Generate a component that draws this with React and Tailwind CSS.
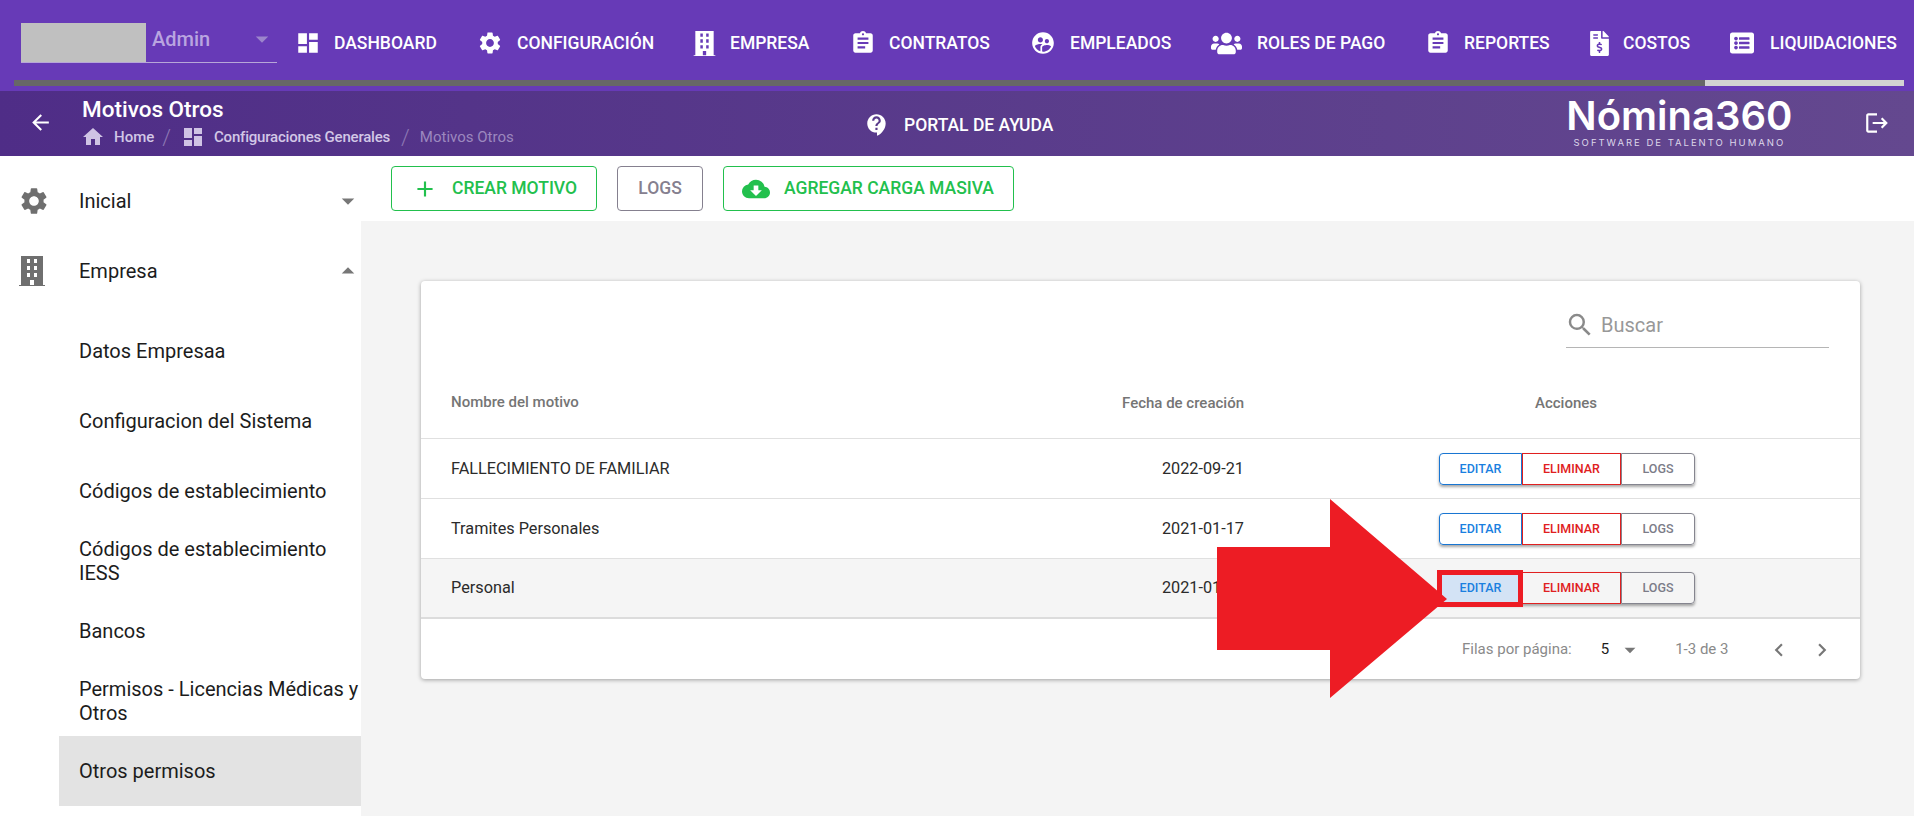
import {
  MdDashboard, MdSettings, MdAssignment, MdSupervisedUserCircle, MdContactSupport, MdCloudDownload,
  MdLogout, MdArrowBack, MdHome, MdSearch, MdChevronLeft, MdChevronRight, MdAdd, MdArrowDropDown, MdArrowDropUp,
} from 'react-icons/md'
import { FaUsers, FaFileInvoiceDollar, FaListAlt } from 'react-icons/fa'

// edificio de la empresa, no hay uno igual en los paquetes
function BuildingIcon({ className }) {
  return (
    <svg viewBox="0 0 26 30" className={className} fill="currentColor">
      <path
        fillRule="evenodd"
        d="M2 0H24V29H26V30H0V29H2V0ZM8 3V7H11V3H8ZM15 3V7H18V3H15ZM8 10V14H11V10H8ZM15 10V14H18V10H15ZM8 17V21H11V17H8ZM15 17V21H18V17H15ZM11 24V29H15V24H11Z"
      />
    </svg>
  )
}

const navItems = [
  { label: 'DASHBOARD', icon: <MdDashboard className="w-[26px] h-[26px]" />, gap: 'gap-[13px]', width: 'w-[182px]' },
  { label: 'CONFIGURACIÓN', icon: <MdSettings className="w-[26px] h-[26px]" />, gap: 'gap-[14px]', width: 'w-[216px]' },
  { label: 'EMPRESA', icon: <BuildingIcon className="w-[23px] h-[25px]" />, gap: 'gap-[14px]', width: 'w-[157px]' },
  { label: 'CONTRATOS', icon: <MdAssignment className="w-[26px] h-[26px]" />, gap: 'gap-[13px]', width: 'w-[180px]' },
  { label: 'EMPLEADOS', icon: <MdSupervisedUserCircle className="w-[26px] h-[26px]" />, gap: 'gap-[14px]', width: 'w-[181px]' },
  { label: 'ROLES DE PAGO', icon: <FaUsers className="w-[31px] h-[25px]" />, gap: 'gap-[15px]', width: 'w-[214px]' },
  { label: 'REPORTES', icon: <MdAssignment className="w-[26px] h-[26px]" />, gap: 'gap-[13px]', width: 'w-[165px]' },
  { label: 'COSTOS', icon: <FaFileInvoiceDollar className="w-[19px] h-[25px]" />, gap: 'gap-[14px]', width: 'w-[139px]' },
  { label: 'LIQUIDACIONES', icon: <FaListAlt className="w-[26px] h-[24px]" />, gap: 'gap-[15px]', width: 'w-[175px]' },
]

const subItems = [
  'Datos Empresaa',
  'Configuracion del Sistema',
  'Códigos de establecimiento',
  'Códigos de establecimiento IESS',
  'Bancos',
  'Permisos - Licencias Médicas y Otros',
  'Otros permisos',
]

const rows = [
  { name: 'FALLECIMIENTO DE FAMILIAR', date: '2022-09-21' },
  { name: 'Tramites Personales', date: '2021-01-17' },
  { name: 'Personal', date: '2021-01-17', hover: true },
]

function ActionButtons({ highlight }) {
  return (
    <div className="flex w-fit ml-[195px] h-8 text-[12.5px] font-medium rounded shadow-[0_2px_3px_rgba(0,0,0,0.35)]">
      <div className={`relative w-[83px] pt-px flex items-center justify-center border border-[#1976d2] rounded-l text-[#1a7fe0] ${highlight ? 'bg-[#d3e3f5]' : ''}`}>
        EDITAR
        {highlight && <div className="absolute -top-[3px] -left-[3px] -right-[2px] -bottom-[4px] border-[5px] border-[#ed1c24]" />}
      </div>
      <div className="w-[99px] pt-px flex items-center justify-center border border-[#e02020] text-[#e02020]">ELIMINAR</div>
      <div className="w-[74px] pt-px flex items-center justify-center border border-[#85858f] rounded-r text-[#7c7c88]">LOGS</div>
    </div>
  )
}

export default function App() {
  return (
    <div className="relative w-[1914px] h-[816px] overflow-hidden bg-white flex flex-col font-['Roboto',sans-serif] text-[#1c1c1c]">
      {/* Barra superior */}
      <div className="h-[91px] bg-[#673ab7] shrink-0 flex flex-col">
        <div className="h-[80px] flex items-start text-white">
          <div className="ml-[21px] w-[256px] h-[41px] mt-[22px] flex border-b border-[#b7a6d8] relative">
            <div className="w-[125px] h-[39px] mt-px bg-[#c0c0c0]" />
            <span className="ml-[6px] mt-[2px] text-[20px] font-medium text-[#b9a5e0]">Admin</span>
            <MdArrowDropDown className="absolute right-[0px] top-[2px] w-[30px] h-[30px] text-[#9c85cc]" />
          </div>
          <div className="ml-[18px] h-[86px] flex items-center">
            {navItems.map((item) => (
              <div key={item.label} className={`flex items-center shrink-0 ${item.gap} ${item.width}`}>
                {item.icon}
                <span className="text-[17.5px] font-medium whitespace-nowrap">{item.label}</span>
              </div>
            ))}
          </div>
        </div>
        <div className="h-[6px] mr-[10px] flex ml-[14px]">
          <div className="flex-1 bg-[#676767]" />
          <div className="w-[199px] bg-[#d3d3d3]" />
        </div>
      </div>

      {/* Encabezado de la pagina */}
      <div className="h-[65px] shrink-0 bg-gradient-to-r from-[#4f2d87] to-[#64488f] flex items-center text-white">
        <MdArrowBack className="ml-[28px] w-[25px] h-[25px] mt-[-2px]" />
        <div className="ml-[29px] w-[782px] flex flex-col">
          <div className="text-[22.5px] font-medium leading-[24px] -mt-[2px]">Motivos Otros</div>
          <div className="flex items-center text-[15px] mt-[5px] h-[22px]">
            <MdHome className="-ml-px w-[24px] h-[24px] text-[#cfc3e4]" />
            <span className="ml-[9px] font-medium text-[#d2c7e6]">Home</span>
            <span className="ml-[8px] text-[#8d77b4] text-[22px] font-light">/</span>
            <MdDashboard className="ml-[10px] w-[24px] h-[24px] text-[#cfc3e4]" />
            <span className="ml-[9px] font-medium tracking-[-0.2px] text-[#d2c7e6]">Configuraciones Generales</span>
            <span className="ml-[11px] text-[#8d77b4] text-[22px] font-light">/</span>
            <span className="ml-[10px] text-[#9c88bf]">Motivos Otros</span>
          </div>
        </div>
        <MdContactSupport className="w-[26px] h-[26px] mt-[2px]" />
        <span className="ml-[14px] text-[17.5px] font-medium mt-[3px]">PORTAL DE AYUDA</span>
        <div className="ml-[514px] w-[224px] flex flex-col items-center -mt-[2px]">
          <span className="font-['Inter',sans-serif] font-semibold text-[40px] leading-[36px] whitespace-nowrap">Nómina360</span>
          <span className="mt-[3px] font-['Inter',sans-serif] text-[9.5px] tracking-[0.21em] leading-[11px] text-[#ddd6ea] whitespace-nowrap">SOFTWARE DE TALENTO HUMANO</span>
        </div>
        <MdLogout className="ml-[73px] w-[26px] h-[26px] -mt-[2px]" />
      </div>

      <div className="flex-1 flex min-h-0">
        {/* Menu lateral */}
        <div className="w-[361px] shrink-0 pt-[10px] text-[20px]">
          <div className="h-[70px] flex items-center relative">
            <MdSettings className="ml-[18px] w-[32px] h-[32px] text-[#6f6f6f]" />
            <span className="ml-[29px]">Inicial</span>
            <MdArrowDropDown className="absolute -right-[2px] w-[30px] h-[30px] text-[#777777]" />
          </div>
          <div className="h-[70px] flex items-center relative">
            <BuildingIcon className="ml-[19px] w-[26px] h-[30px] text-[#6f6f6f]" />
            <span className="ml-[34px]">Empresa</span>
            <MdArrowDropUp className="absolute -right-[2px] w-[30px] h-[30px] text-[#777777]" />
          </div>
          <div className="mt-[10px] ml-[59px]">
            {subItems.map((label) => (
              <div
                key={label}
                className={`h-[70px] flex items-center pl-[20px] leading-[24px] ${label === 'Otros permisos' ? 'bg-[#e3e3e3]' : ''}`}
              >
                <span>{label}</span>
              </div>
            ))}
          </div>
        </div>

        <div className="flex-1 flex flex-col min-w-0">
          {/* Acciones */}
          <div className="h-[65px] shrink-0 flex items-start pt-[10px] pl-[30px] gap-[20px] text-[17.5px] font-medium">
            <div className="w-[206px] h-[45px] flex items-center border border-[#22c04d] rounded text-[#22c04d]">
              <MdAdd className="ml-[20px] w-[26px] h-[26px]" />
              <span className="ml-[14px] whitespace-nowrap">CREAR MOTIVO</span>
            </div>
            <div className="w-[86px] h-[45px] flex items-center justify-center border border-[#85808f] rounded text-[#85808f]">LOGS</div>
            <div className="w-[291px] h-[45px] flex items-center border border-[#22c04d] rounded text-[#22c04d]">
              <MdCloudDownload className="ml-[18px] w-[28px] h-[28px]" />
              <span className="ml-[14px] whitespace-nowrap">AGREGAR CARGA MASIVA</span>
            </div>
          </div>

          {/* Tabla */}
          <div className="flex-1 bg-[#f4f4f4] pt-[60px] pl-[60px] pr-[54px]">
            <div className="bg-white rounded shadow-[0_1px_4px_rgba(0,0,0,0.35)] h-[398px]">
              <div className="h-[87px] relative">
                <div className="absolute left-[1145px] top-[22px] w-[263px] h-[45px] flex items-center border-b border-[#b5b5b5] text-[#989898]">
                  <MdSearch className="ml-[-1px] w-[30px] h-[30px] text-[#8a8a8a]" />
                  <span className="ml-[6px] text-[20px]">Buscar</span>
                </div>
              </div>
              <div className="h-[71px] grid grid-cols-[650px_173px_1fr] items-center text-[15px] font-medium text-[#757575] border-b border-[#e0e0e0]">
                <div className="pl-[30px] -mt-[2px]">Nombre del motivo</div>
                <div className="text-right">Fecha de creación</div>
                <div className="pl-[291px]">Acciones</div>
              </div>
              {rows.map((row, i) => (
                <div
                  key={row.name}
                  className={`h-[60px] grid grid-cols-[650px_173px_1fr] items-center text-[16.25px] text-[#2b2b2b] ${i === 2 ? 'border-b-2 bg-[#f5f5f5] border-[#dcdcdc]' : 'border-b border-[#e0e0e0]'}`}
                >
                  <div className="pl-[30px] pt-px">{row.name}</div>
                  <div className="text-right pt-px">{row.date}</div>
                  <ActionButtons highlight={row.hover} />
                </div>
              ))}
              <div className="h-[57px] pt-[4px] flex items-center text-[15px] text-[#8a8a8a] pl-[1041px]">
                <span>Filas por página:</span>
                <span className="ml-[29px] text-[#1c1c1c]">5</span>
                <MdArrowDropDown className="ml-[8px] w-[26px] h-[26px] text-[#777777]" />
                <span className="ml-[32px]">1-3 de 3</span>
                <MdChevronLeft className="ml-[38px] w-[26px] h-[26px] text-[#777777]" />
                <MdChevronRight className="ml-[17px] w-[26px] h-[26px] text-[#777777]" />
              </div>
            </div>
          </div>
        </div>
      </div>

      {/* Flecha roja de la anotacion */}
      <svg className="absolute left-[1217px] top-[499px] w-[230px] h-[199px] pointer-events-none" viewBox="0 0 230 199">
        <polygon points="0,48 113,48 113,0 230,100 113,199 113,151 0,151" fill="#ed1c24" />
      </svg>
    </div>
  )
}
